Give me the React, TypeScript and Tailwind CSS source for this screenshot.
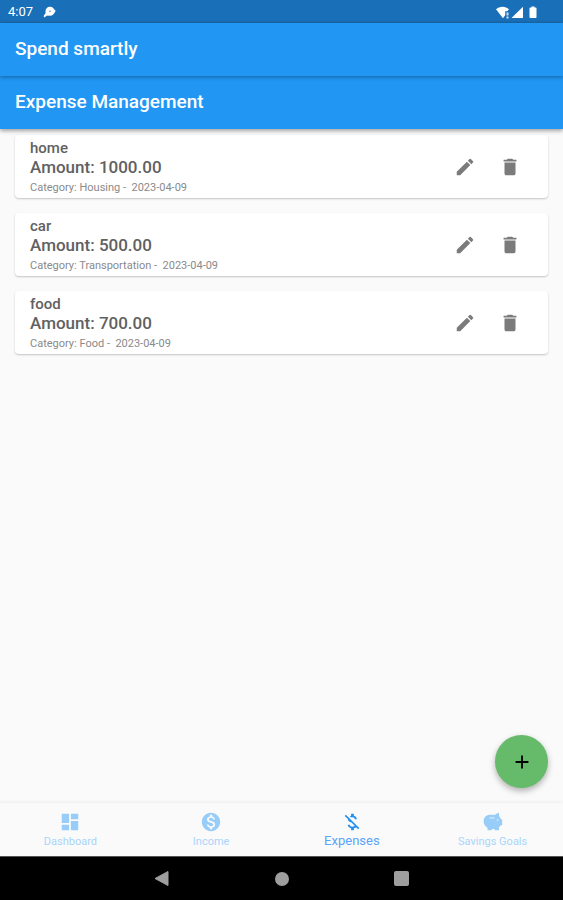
import type { ReactNode } from "react";
import {
  MdAdd,
  MdDashboard,
  MdDelete,
  MdEdit,
  MdMoneyOff,
  MdMonetizationOn,
} from "react-icons/md";

type Expense = { name: string; amount: string; category: string; date: string };

const expenses: Expense[] = [
  { name: "home", amount: "1000.00", category: "Housing", date: "2023-04-09" },
  { name: "car", amount: "500.00", category: "Transportation", date: "2023-04-09" },
  { name: "food", amount: "700.00", category: "Food", date: "2023-04-09" },
];

function StatusBar() {
  return (
    <div className="flex h-[23px] shrink-0 items-center justify-between bg-[#1a70b8] pt-px pr-6 pl-2 text-white">
      <div className="flex items-center gap-2.5">
        <span className="text-[13px] leading-4">4:07</span>
        <svg width="13" height="12" viewBox="0 0 13 12" aria-hidden="true">
          <circle cx="7" cy="5.200" r="4.500" fill="#fff" />
          <path d="M9.500 2l3.200 2.800-2 3.200zM2.800 6.500L.5 10.200l1.200 1.200 1.800-1.600 2.500-.3z" fill="#fff" />
          <circle cx="7" cy="5.200" r="0.700" fill="#1a70b8" />
        </svg>
      </div>
      <svg width="43" height="13" viewBox="0 0 43 13" fill="#fff" aria-hidden="true">
        <path d="M0 3.200C3.500-.2 9.500-.2 13 3.200L11.200 5.300H9.200V9.200L7 12.300z" />
        <path d="M10.500 6.500h2v3h-2zM10.500 10.500h2v2h-2z" opacity="0.800" />
        <path d="M27 .8V12H15.500z" />
        <path d="M35.500 1.500V.5h3v1h1.200c.5 0 .8.300.8.800v9c0 .5-.3.800-.8.800h-5.400c-.5 0-.8-.3-.8-.8v-9c0-.5.300-.8.800-.8z" />
      </svg>
    </div>
  );
}

function AppBar({ children }: { children: ReactNode }) {
  return (
    <div className="flex h-[53px] shrink-0 items-center bg-[#2196f3] px-[15px] text-[19px] font-medium text-white">
      {children}
    </div>
  );
}

function ExpenseCard({ item }: { item: Expense }) {
  return (
    <li className="flex h-[63px] items-center justify-between rounded-[4px] bg-white pr-4 pl-[15px] shadow-[0_1px_2px_rgba(0,0,0,0.22)]">
      <div className="pt-1 text-[#616161]">
        <h2 className="text-[15px] leading-[18px] font-medium">{item.name}</h2>
        <p className="text-[17px] leading-5 font-medium">Amount: {item.amount}</p>
        <p className="text-[11px] leading-[22px] whitespace-pre text-[#8a8a8a]">
          {`Category: ${item.category} -  ${item.date}`}
        </p>
      </div>
      <div className="flex gap-px text-[#7b7b7b]">
        <button type="button" aria-label={`Edit ${item.name}`} className="grid size-11 place-items-center">
          <MdEdit size={22} />
        </button>
        <button type="button" aria-label={`Delete ${item.name}`} className="grid size-11 place-items-center">
          <MdDelete size={22} />
        </button>
      </div>
    </li>
  );
}

function PiggyIcon({ size, className }: { size: number; className?: string }) {
  return (
    <svg width={size} height={size} viewBox="0 0 24 24" className={className} fill="currentColor" aria-hidden="true">
      <path d="M14.500 4.200c1-1.300 2.600-2 4.100-2v3.600c1 .9 1.700 1.900 2.100 3.200h1.300v6.200l-2 .8-1.500 2V21h-4.800v-1.500h-2.900V21H6v-2.700C3.300 16.700 1.800 14.500 1.800 11.300 1.800 6.800 4.800 4.200 8.800 4.200z" />
      <path d="M8 6.800h5.500v1.500H8z" fill="#fafafa" opacity="0.600" />
      <circle cx="17" cy="9.700" r="1" fill="#fafafa" opacity="0.700" />
    </svg>
  );
}

const tabs = [
  { label: "Dashboard", Icon: MdDashboard, active: false },
  { label: "Income", Icon: MdMonetizationOn, active: false },
  { label: "Expenses", Icon: MdMoneyOff, active: true },
  { label: "Savings Goals", Icon: PiggyIcon, active: false },
];

function BottomTabs() {
  return (
    <nav className="flex h-[53px] shrink-0 bg-[#fafafa] shadow-[0_-1px_3px_rgba(0,0,0,0.06)]">
      {tabs.map(({ label, Icon, active }) => (
        <a
          key={label}
          href="#"
          aria-current={active ? "page" : undefined}
          className={
            active
              ? "flex flex-1 flex-col items-center pt-2 text-[13px] leading-4 text-[#5ba4f7]"
              : "flex flex-1 flex-col items-center pt-2 text-[11px] leading-[18px] text-[#a9d5fa]"
          }
        >
          <Icon size={22} className={active ? "text-[#2490ee]" : "text-[#97cdf8]"} />
          <span>{label}</span>
        </a>
      ))}
    </nav>
  );
}

function SystemNav() {
  return (
    <div className="flex h-11 shrink-0 items-center justify-center gap-[76px] border-t border-[#555] bg-black text-[#9e9e9e]">
      <button type="button" aria-label="Back" className="grid size-11 place-items-center">
        <svg width="16" height="18" viewBox="0 0 16 18" fill="currentColor">
          <path d="M14 1.500v14L1 8.500z" stroke="currentColor" strokeLinejoin="round" />
        </svg>
      </button>
      <button type="button" aria-label="Home" className="grid size-11 place-items-center">
        <span className="size-[14px] rounded-full bg-current" />
      </button>
      <button type="button" aria-label="Recent apps" className="grid size-11 place-items-center">
        <span className="size-[15px] rounded-[2px] bg-current" />
      </button>
    </div>
  );
}

export default function App() {
  return (
    <div className="flex min-h-screen flex-col bg-[#fafafa] font-[Roboto,'Liberation_Sans',sans-serif]">
      <StatusBar />
      <header className="relative z-10 shadow-[0_2px_4px_rgba(0,0,0,0.35)]">
        <div className="relative z-10 shadow-[0_1px_4px_rgba(0,0,0,0.35)]">
          <AppBar>
            <h1>Spend smartly</h1>
          </AppBar>
        </div>
        <AppBar>
          <p>Expense Management</p>
        </AppBar>
      </header>
      <main className="relative flex-1">
        <ul className="flex flex-col gap-[15px] px-[15px] pt-1.5">
          {expenses.map((item) => (
            <ExpenseCard key={item.name} item={item} />
          ))}
        </ul>
        <button
          type="button"
          aria-label="Add expense"
          className="absolute right-[15px] bottom-[15px] grid size-[53px] place-items-center rounded-full bg-[#66bb6a] text-black shadow-[0_3px_6px_rgba(0,0,0,0.3)]"
        >
          <MdAdd size={22} />
        </button>
      </main>
      <BottomTabs />
      <SystemNav />
    </div>
  );
}
